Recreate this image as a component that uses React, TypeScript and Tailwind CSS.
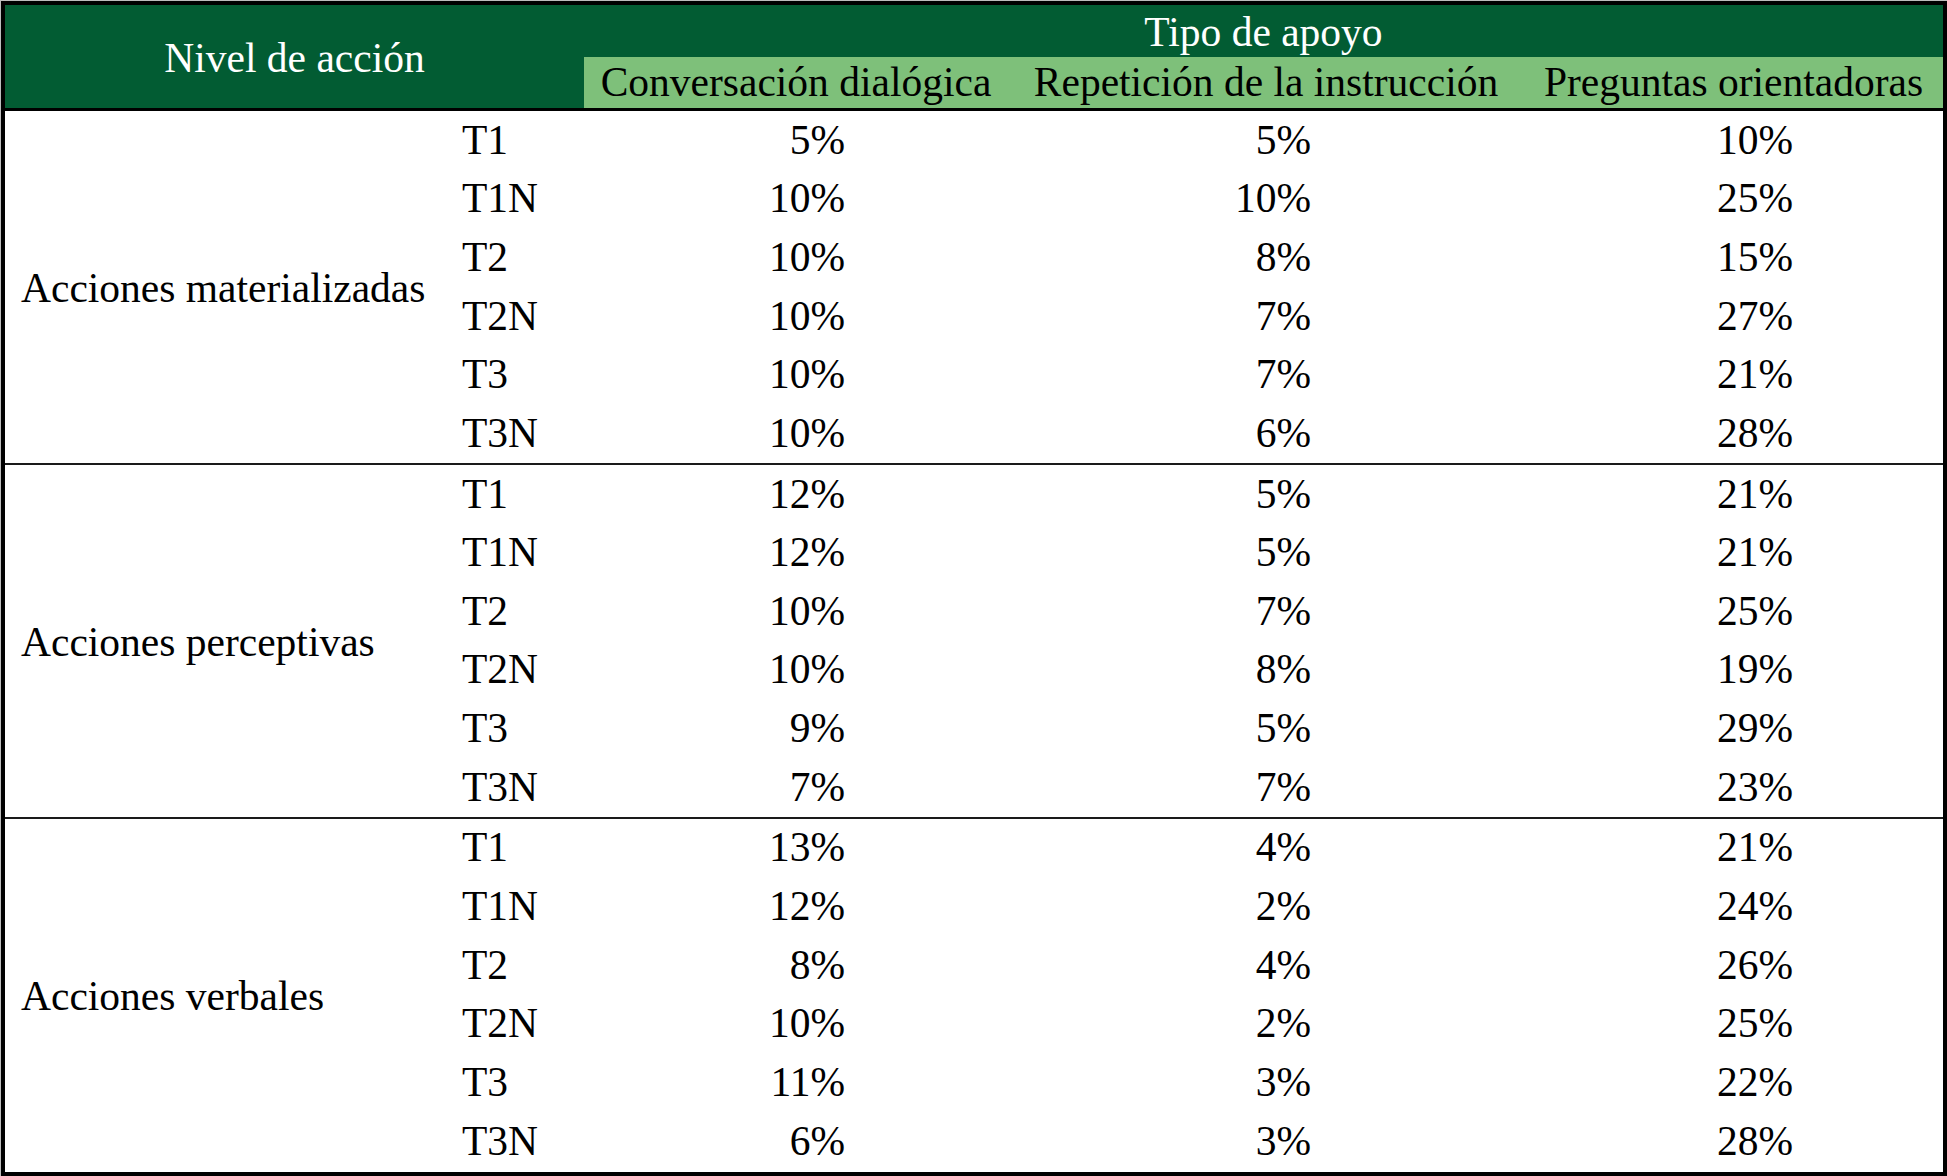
const groups = [
  {
    name: 'Acciones materializadas',
    rows: [
      ['T1', '5%', '5%', '10%'],
      ['T1N', '10%', '10%', '25%'],
      ['T2', '10%', '8%', '15%'],
      ['T2N', '10%', '7%', '27%'],
      ['T3', '10%', '7%', '21%'],
      ['T3N', '10%', '6%', '28%'],
    ],
  },
  {
    name: 'Acciones perceptivas',
    rows: [
      ['T1', '12%', '5%', '21%'],
      ['T1N', '12%', '5%', '21%'],
      ['T2', '10%', '7%', '25%'],
      ['T2N', '10%', '8%', '19%'],
      ['T3', '9%', '5%', '29%'],
      ['T3N', '7%', '7%', '23%'],
    ],
  },
  {
    name: 'Acciones verbales',
    rows: [
      ['T1', '13%', '4%', '21%'],
      ['T1N', '12%', '2%', '24%'],
      ['T2', '8%', '4%', '26%'],
      ['T2N', '10%', '2%', '25%'],
      ['T3', '11%', '3%', '22%'],
      ['T3N', '6%', '3%', '28%'],
    ],
  },
];

const Group = ({ name, rows, last }: { name: string; rows: string[][]; last: boolean }) => (
  <div className={`flex ${last ? '' : 'border-b-2 border-[#1a1a1a]'}`}>
    <div className="w-[455px] flex items-center pl-[16px] pt-[3px]">{name}</div>
    <div className="flex flex-col">
      {rows.map(([label, a, b, c]) => (
        <div key={label} className="flex h-[58.67px] items-center">
          <div className="w-[124px] pl-[2px]">{label}</div>
          <div className="w-[424px] text-right pr-[163px]">{a}</div>
          <div className="w-[516px] text-right pr-[213px]">{b}</div>
          <div className="w-[419px] text-right pr-[150px]">{c}</div>
        </div>
      ))}
    </div>
  </div>
);

export default function App() {
  return (
    <div className="w-[1947px] h-[1176px] bg-[#bdbdbd] pt-px pl-px text-[41.5px] leading-none text-black font-['Liberation_Serif','Times_New_Roman',serif]">
      <div className="w-[1946px] h-[1175px] bg-white border-4 border-black">
        <div className="flex h-[103px] bg-[#025c33] border-b-[3px] border-black box-content">
          <div className="w-[579px] flex items-center justify-center pt-[5px] text-white">Nivel de acción</div>
          <div className="flex-1 flex flex-col">
            <div className="h-[52px] flex items-center justify-center pt-[4px] text-white">Tipo de apoyo</div>
            <div className="h-[51px] flex bg-[#7ec07a]">
              <div className="w-[424px] flex items-center justify-center">Conversación dialógica</div>
              <div className="w-[516px] flex items-center justify-center">Repetición de la instrucción</div>
              <div className="w-[419px] flex items-center justify-center">Preguntas orientadoras</div>
            </div>
          </div>
        </div>
        {groups.map((g, i) => (
          <Group key={g.name} name={g.name} rows={g.rows} last={i === groups.length - 1} />
        ))}
      </div>
    </div>
  );
}
